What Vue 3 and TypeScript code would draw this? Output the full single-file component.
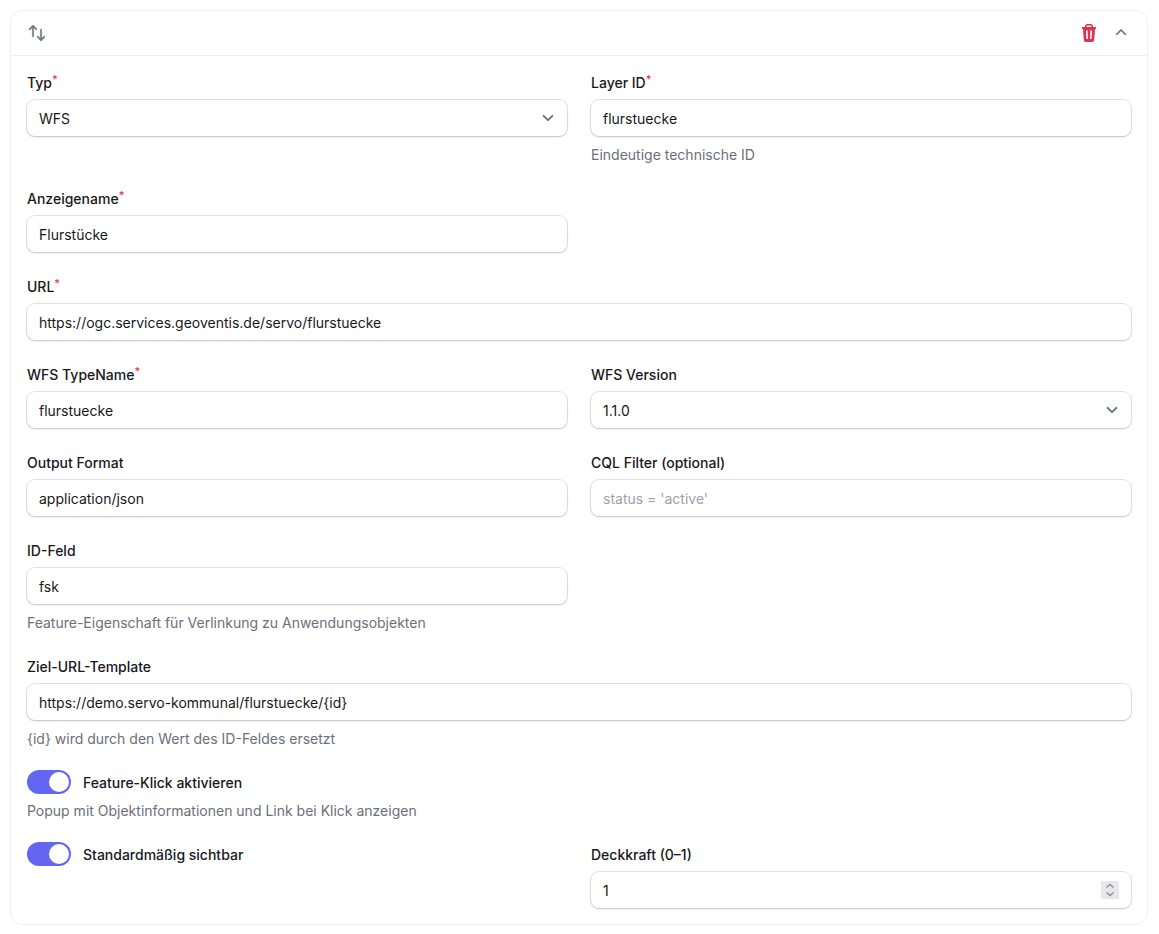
<script setup lang="ts">
import { reactive } from 'vue'

interface Field {
  key: string
  label: string
  kind: 'text' | 'select' | 'number' | 'toggle'
  required?: boolean
  wide?: boolean
  startsRow?: boolean
  hint?: string
  placeholder?: string
  options?: string[]
}

const values = reactive<Record<string, string | number | boolean>>({
  type: 'WFS',
  layerId: 'flurstuecke',
  displayName: 'Flurstücke',
  url: 'https://ogc.services.geoventis.de/servo/flurstuecke',
  typeName: 'flurstuecke',
  version: '1.1.0',
  outputFormat: 'application/json',
  cqlFilter: '',
  idField: 'fsk',
  targetUrl: 'https://demo.servo-kommunal/flurstuecke/{id}',
  featureClick: true,
  visible: true,
  opacity: 1,
})

const fields: Field[] = [
  { key: 'type', label: 'Typ', kind: 'select', required: true, options: ['WFS', 'WMS'] },
  { key: 'layerId', label: 'Layer ID', kind: 'text', required: true, hint: 'Eindeutige technische ID' },
  { key: 'displayName', label: 'Anzeigename', kind: 'text', required: true },
  { key: 'url', label: 'URL', kind: 'text', required: true, wide: true },
  { key: 'typeName', label: 'WFS TypeName', kind: 'text', required: true },
  { key: 'version', label: 'WFS Version', kind: 'select', options: ['1.0.0', '1.1.0', '2.0.0'] },
  { key: 'outputFormat', label: 'Output Format', kind: 'text' },
  { key: 'cqlFilter', label: 'CQL Filter (optional)', kind: 'text', placeholder: "status = 'active'" },
  { key: 'idField', label: 'ID-Feld', kind: 'text', hint: 'Feature-Eigenschaft für Verlinkung zu Anwendungsobjekten' },
  { key: 'targetUrl', label: 'Ziel-URL-Template', kind: 'text', wide: true, hint: '{id} wird durch den Wert des ID-Feldes ersetzt' },
  { key: 'featureClick', label: 'Feature-Klick aktivieren', kind: 'toggle', hint: 'Popup mit Objektinformationen und Link bei Klick anzeigen' },
  { key: 'visible', label: 'Standardmäßig sichtbar', kind: 'toggle', startsRow: true },
  { key: 'opacity', label: 'Deckkraft (0–1)', kind: 'number' },
]
</script>

<template>
  <main class="page">
    <section class="card">
      <header class="card-header">
        <button type="button" class="icon-button" aria-label="Verschieben">
          <svg viewBox="0 0 20 20" fill="currentColor" fill-rule="evenodd" stroke="currentColor" stroke-width="0.3" aria-hidden="true">
            <path d="M2.24 6.8a.75.75 0 0 0 1.06-.04l1.95-2.1v8.59a.75.75 0 0 0 1.5 0V4.66l1.95 2.1a.75.75 0 1 0 1.1-1.02l-3.25-3.5a.75.75 0 0 0-1.1 0L2.2 5.74a.75.75 0 0 0 .04 1.06Zm8 6.4a.75.75 0 0 0-.04 1.06l3.25 3.5a.75.75 0 0 0 1.1 0l3.25-3.5a.75.75 0 1 0-1.1-1.02l-1.95 2.1V6.75a.75.75 0 0 0-1.5 0v8.59l-1.95-2.1a.75.75 0 0 0-1.06-.04Z" />
          </svg>
        </button>
        <div class="actions">
          <button type="button" class="icon-button danger" aria-label="Löschen">
            <svg viewBox="0 0 20 20" fill="currentColor" fill-rule="evenodd" aria-hidden="true">
              <path d="M6 4V3.2C6 2 7 1 8.2 1h3.6C13 1 14 2 14 3.200V4h2.300a.7.7 0 0 1 0 1.900H16L15.200 17a2.200 2.200 0 0 1-2.200 2H7a2.200 2.200 0 0 1-2.200-2L4 5.900h-.3a.7.7 0 0 1 0-1.900H6Zm1.500 0h5v-.6a.9.9 0 0 0-.9-.9H8.400a.9.9 0 0 0-.9.9V4ZM7 7.500l.4 8.500h1.600L8.700 7.500H7Zm4.300 0L11 16h1.600L13 7.500h-1.700Z" />
            </svg>
          </button>
          <button type="button" class="icon-button" aria-label="Einklappen">
            <svg viewBox="0 0 20 20" fill="currentColor" fill-rule="evenodd" stroke="currentColor" stroke-width="0.3" aria-hidden="true">
              <path d="M9.47 6.47a.75.75 0 0 1 1.06 0l4.25 4.25a.75.75 0 1 1-1.06 1.060L10 8.060l-3.720 3.720a.75.75 0 0 1-1.060-1.060l4.250-4.250Z" />
            </svg>
          </button>
        </div>
      </header>

      <form class="fields" @submit.prevent>
        <div
          v-for="field in fields"
          :key="field.key"
          class="field"
          :class="{ wide: field.wide, 'starts-row': field.startsRow }"
        >
          <div class="label-row">
            <input
              v-if="field.kind === 'toggle'"
              :id="field.key"
              v-model="values[field.key]"
              type="checkbox"
              role="switch"
              class="toggle"
            />
            <label :for="field.key">{{ field.label }}<sup v-if="field.required">*</sup></label>
          </div>

          <div v-if="field.kind === 'select'" class="control select-control">
            <select :id="field.key" v-model="values[field.key]">
              <option v-for="option in field.options" :key="option">{{ option }}</option>
            </select>
            <svg viewBox="0 0 20 20" fill="none" stroke="currentColor" stroke-width="1.7" stroke-linecap="round" stroke-linejoin="round" aria-hidden="true">
              <path d="m6 8 4 4 4-4" />
            </svg>
          </div>
          <div v-else-if="field.kind === 'number'" class="control">
            <input :id="field.key" v-model="values[field.key]" type="number" min="0" max="1" step="0.1" />
          </div>
          <div v-else-if="field.kind === 'text'" class="control">
            <input :id="field.key" v-model="values[field.key]" type="text" :placeholder="field.placeholder" />
          </div>

          <p v-if="field.hint" class="hint">{{ field.hint }}</p>
        </div>
      </form>
    </section>
  </main>
</template>

<style>
body {
  background: #fff;
}
</style>

<style scoped>
.page {
  padding: 11px 12px 10px 11px;
  font-family: Inter, "Liberation Sans", sans-serif;
  font-size: 14px;
  line-height: 20px;
  color: #18181b;
}

.card {
  border-radius: 12px;
  background: #fff;
  box-shadow: 0 0 0 1px rgba(9, 9, 11, 0.06);
}

.card-header {
  display: flex;
  align-items: center;
  justify-content: space-between;
  height: 44px;
  padding: 0 16px;
}

.actions {
  display: flex;
  gap: 12px;
}

.icon-button {
  display: block;
  width: 20px;
  height: 20px;
  padding: 0;
  border: 0;
  background: none;
  color: #71757f;
  cursor: pointer;
}

.icon-button svg {
  display: block;
  width: 20px;
  height: 20px;
}

.icon-button.danger {
  color: #e0304f;
}

.fields {
  display: grid;
  grid-template-columns: repeat(2, minmax(0, 1fr));
  gap: 24px;
  padding: 16px;
  border-top: 1px solid #efeff0;
}

.field {
  display: flex;
  flex-direction: column;
  gap: 8px;
}

.wide {
  grid-column: 1 / -1;
}

.starts-row {
  grid-column-start: 1;
}

.label-row {
  display: flex;
  align-items: center;
  gap: 12px;
  height: 20px;
}

label {
  padding-top: 2px;
  font-weight: 500;
}

sup {
  position: relative;
  top: -5px;
  font-size: 11px;
  line-height: 0;
  vertical-align: baseline;
  color: #e0304f;
}

.control {
  display: grid;
  border-radius: 8px;
  background: #fff;
  box-shadow: 0 0 0 1px rgba(9, 9, 11, 0.1), 0 1px 3px rgba(0, 0, 0, 0.1), 0 1px 2px rgba(0, 0, 0, 0.06);
}

.control input,
.control select {
  grid-area: 1 / 1;
  box-sizing: border-box;
  width: 100%;
  height: 36px;
  margin: 0;
  padding: 0 12px;
  border: 0;
  border-radius: 8px;
  outline: 0;
  background: transparent;
  font: inherit;
  color: inherit;
}

.control:focus-within {
  box-shadow: 0 0 0 2px #6366f1;
}

.control select {
  appearance: none;
  padding-top: 2px;
  padding-right: 36px;
}

.select-control svg {
  grid-area: 1 / 1;
  place-self: center end;
  width: 22px;
  height: 22px;
  margin-right: 8px;
  color: #6b7280;
  pointer-events: none;
}

.control input::placeholder {
  color: #9f9fa9;
  opacity: 1;
}

.control input::-webkit-inner-spin-button {
  appearance: none;
  width: 18px;
  height: 18px;
  opacity: 1;
  background: #e8e8ec url("data:image/svg+xml,%3Csvg xmlns='http://www.w3.org/2000/svg' viewBox='0 0 18 18' fill='none' stroke='%238e8e9c' stroke-width='1.5'%3E%3Cpath d='m5.500 6.500 3.500-3 3.500 3M5.500 11.500l3.500 3 3.500-3'/%3E%3C/svg%3E") center / 18px 18px no-repeat;
}

.toggle {
  appearance: none;
  box-sizing: border-box;
  flex: none;
  width: 44px;
  height: 24px;
  margin: 0;
  padding: 2px;
  border-radius: 12px;
  background: #e4e4e7;
  cursor: pointer;
}

.toggle::before {
  content: "";
  display: block;
  width: 20px;
  height: 20px;
  border-radius: 50%;
  background: #fff;
}

.toggle:checked {
  background: #6366f1;
}

.toggle:checked::before {
  margin-left: auto;
}

.toggle:focus-visible {
  outline: 2px solid #a5b4fc;
  outline-offset: 2px;
}

.hint {
  margin: 0 0 -2px;
  line-height: 22px;
  color: #6b7079;
}
</style>
